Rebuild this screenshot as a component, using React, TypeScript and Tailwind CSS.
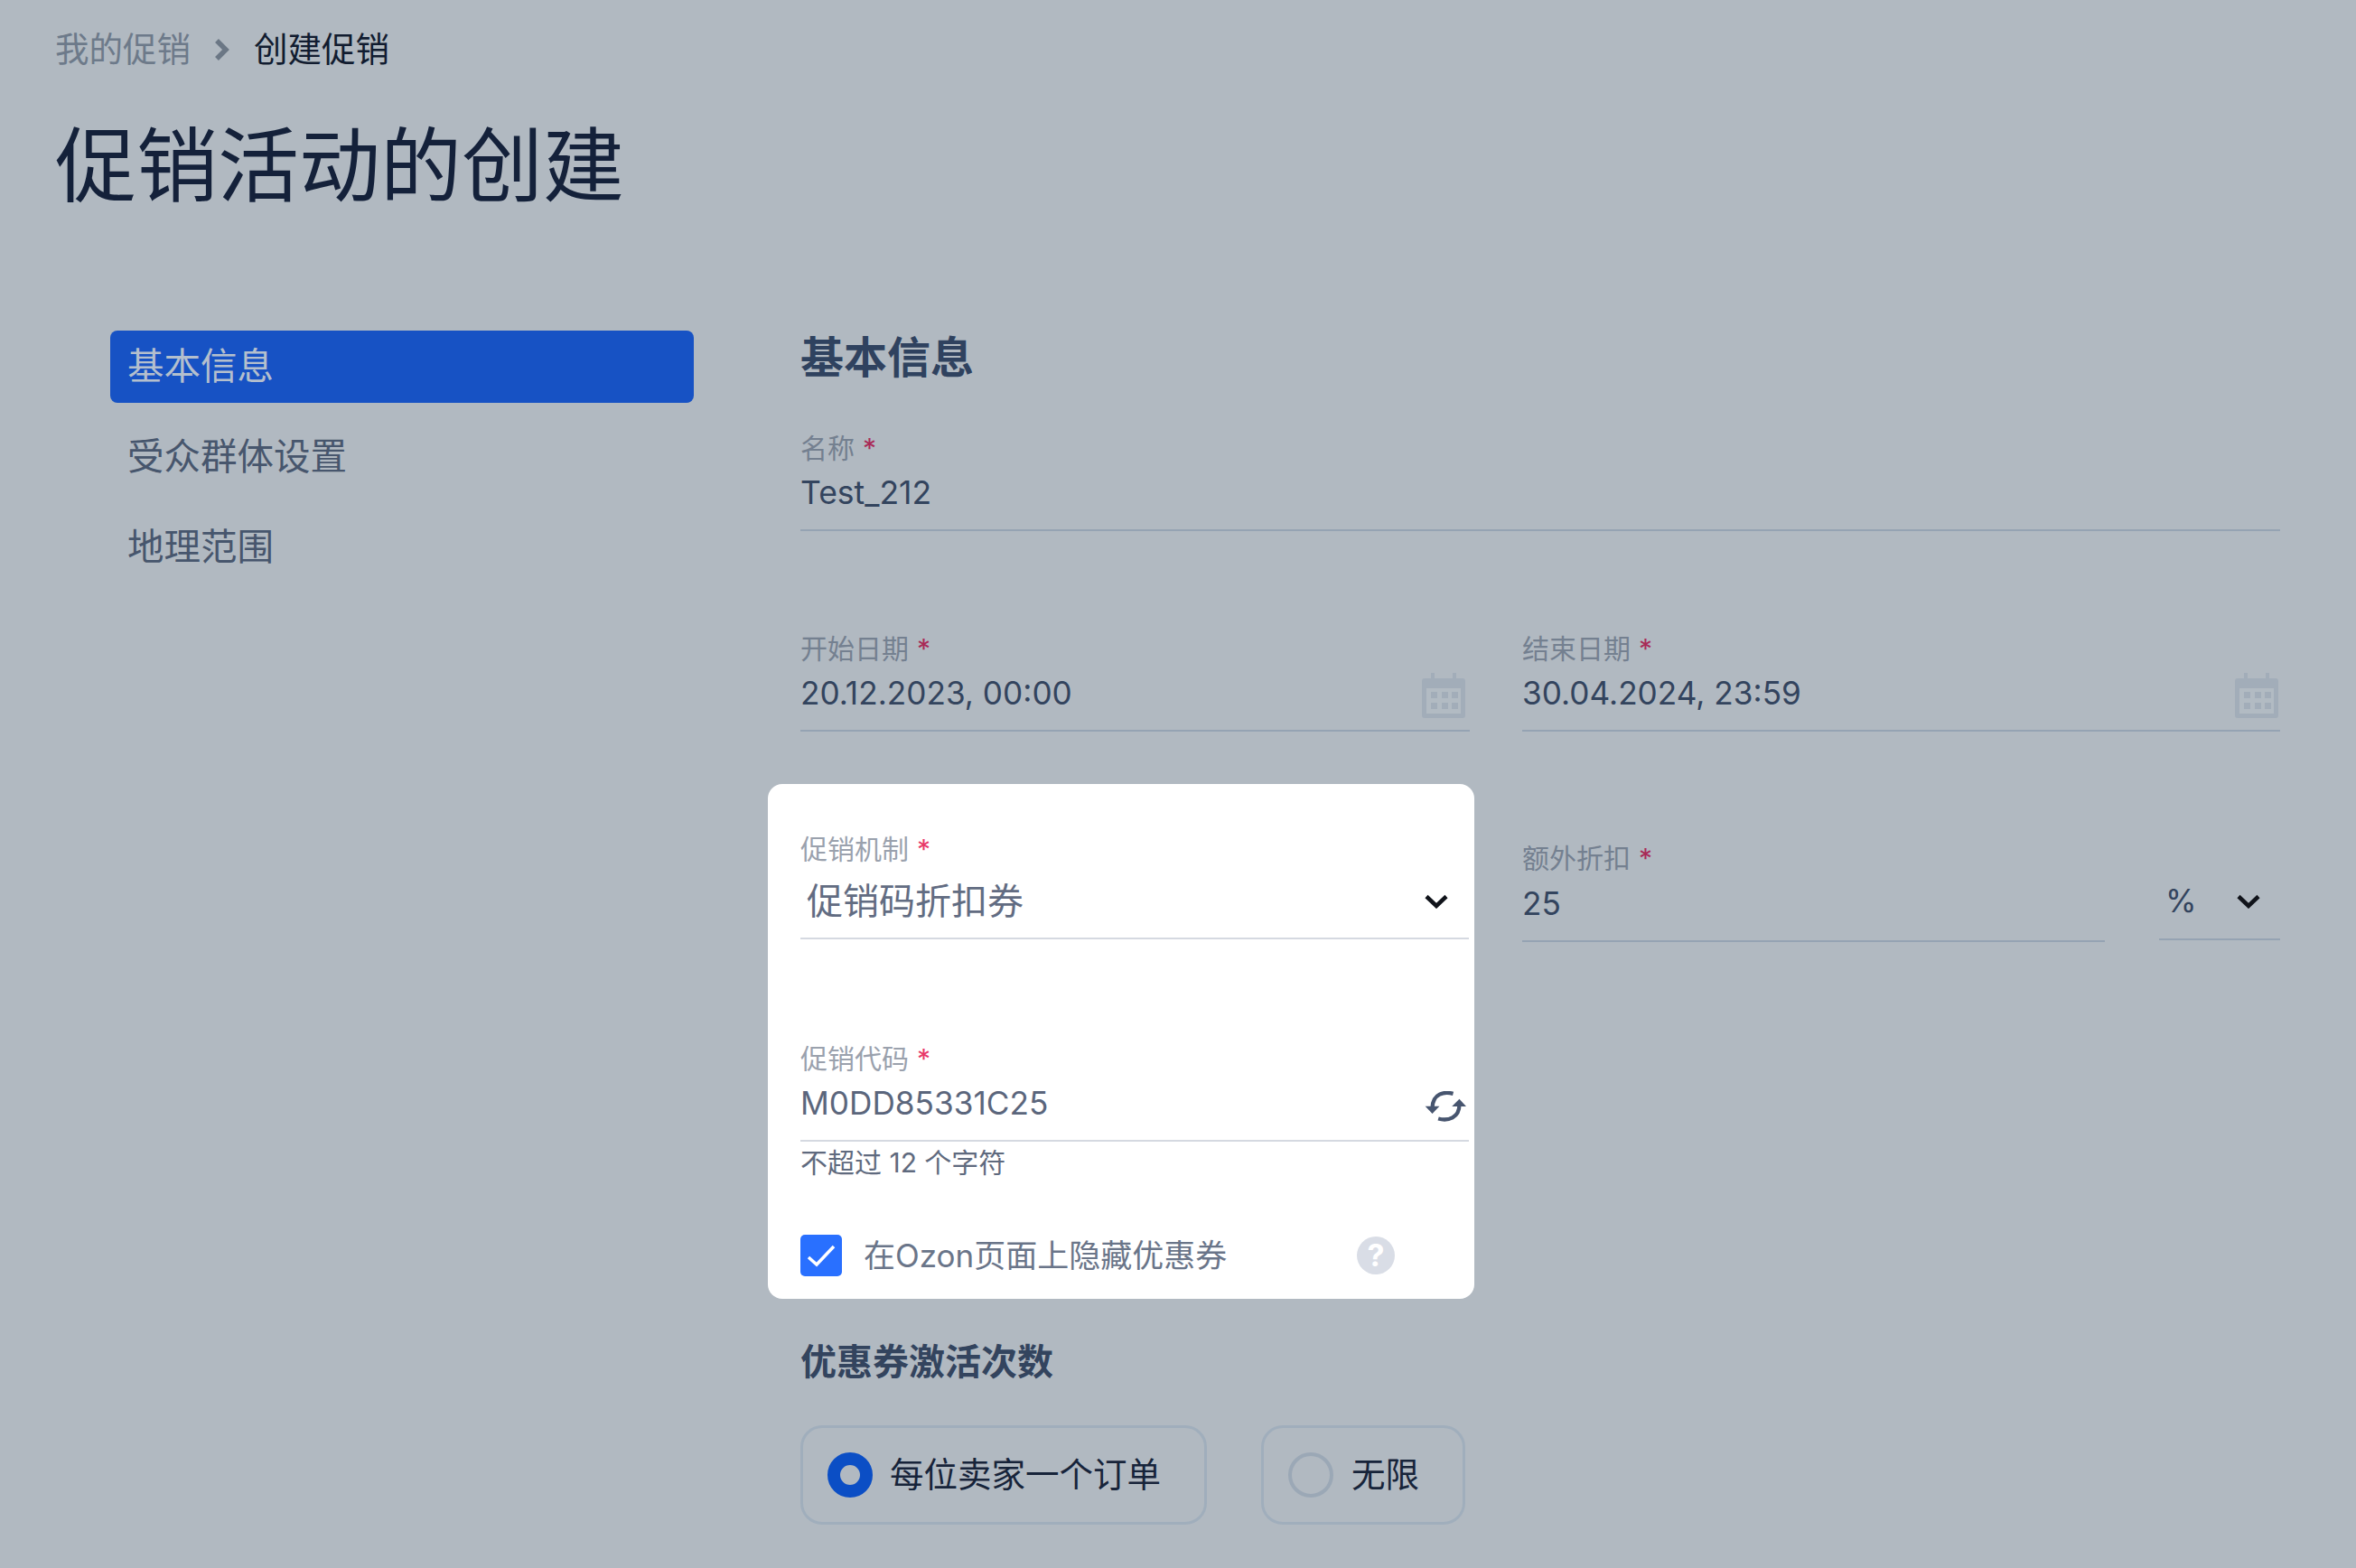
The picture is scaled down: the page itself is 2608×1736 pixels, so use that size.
import React from "react";

const Star = ({ card }: { card?: boolean }) => (
  <span className={`ml-[9px] text-[30px] leading-[30px] ${card ? "text-[#e8386a]" : "text-[#a92a57]"}`}>*</span>
);

const Label = ({ text, card }: { text: string; card?: boolean }) => (
  <div className={`h-[40px] flex items-center text-[30px] font-normal ${card ? "text-[#9aa1ad]" : "text-[#748090]"}`}>
    {text}
    <Star card={card} />
  </div>
);

const Calendar = ({ right }: { right?: boolean }) => (
  <svg width="50" height="52" viewBox="0 0 50 52" className={right ? "mt-[7px] mr-[1px]" : "mt-[7px] mr-[4px]"}>
    <rect x="11" y="0" width="4" height="8" fill="#a2adb9" />
    <rect x="35" y="0" width="4" height="8" fill="#a2adb9" />
    <rect x="1" y="6" width="48" height="44" rx="3" fill="#a2adb9" />
    <rect x="6" y="17" width="38" height="28" fill="#b2bbc3" />
    {[10, 22, 33].map((x) => (
      <React.Fragment key={x}>
        <rect x={x + 1} y="21" width="7" height="7" fill="#a2adb9" />
        <rect x={x + 1} y="33" width="7" height="7" fill="#a2adb9" />
      </React.Fragment>
    ))}
  </svg>
);

const Chevron = () => (
  <svg width="26" height="16" viewBox="0 0 26 16" fill="none" className="shrink-0">
    <path d="M2 2.5 L13 13 L24 2.5" stroke="#10131a" strokeWidth="4.5" />
  </svg>
);

const Refresh = () => (
  <svg width="46" height="34" viewBox="112 85 140 102" fill="none" className="mt-[16px] mr-[3px]">
    <path d="M208 93 C178 85 140 92 138 140" stroke="#47556f" strokeWidth="13" />
    <path d="M114 135 L162 135 L138 160 Z" fill="#47556f" />
    <path d="M158 177 C190 186 230 175 229 128" stroke="#47556f" strokeWidth="13" />
    <path d="M204 136 L252 136 L229 111 Z" fill="#47556f" />
  </svg>
);

const Help = () => (
  <div className="w-[42px] h-[42px] rounded-full bg-[#d9dde6] flex items-center justify-center text-white font-bold text-[34px] leading-none">
    ?
  </div>
);

const Radio = ({ checked, text, wide }: { checked?: boolean; text: string; wide?: boolean }) => (
  <div
    className={`h-[110px] rounded-[24px] border-[3px] border-[#a0aebc] flex items-center ${
      wide ? "w-[450px] pl-[27px]" : "w-[226px] pl-[27px]"
    }`}
  >
    <div
      className={`w-[50px] h-[50px] rounded-full ${
        checked ? "border-[14px] border-[#0b4ec5] bg-[#b1b9c1]" : "border-[4px] border-[#9ba8b6]"
      }`}
    />
    <span className={`text-[37.5px] font-normal text-[#17243a] ${checked ? "ml-[19px]" : "ml-[20px]"}`}>{text}</span>
  </div>
);

export default function App() {
  return (
    <div
      className="w-[2608px] h-[1736px] overflow-hidden bg-[#b1b9c1] pl-[61px] pt-[28px]"
      style={{ fontFamily: 'Inter, "Noto Sans CJK SC", sans-serif' }}
    >
      <div className="h-[54px] flex items-center text-[37.5px] font-normal">
        <span className="text-[#6d7a8a]">我的促销</span>
        <svg width="17" height="26" viewBox="0 0 17 26" fill="none" className="ml-[26px] mr-[27px]">
          <path d="M3 3 L13 13 L3 23" stroke="#6b7785" strokeWidth="5.5" />
        </svg>
        <span className="text-[#111c30]">创建促销</span>
      </div>
      <h1 className="h-[120px] mt-[42px] leading-[120px] text-[90px] font-normal text-[#14213a]">促销活动的创建</h1>
      <div className="flex mt-[122px]">
        <aside className="w-[646px] ml-[61px] shrink-0">
          <div className="h-[80px] rounded-[8px] bg-[#1752c4] text-[#b4bfcd] text-[40.5px] font-normal pl-[19px] flex items-center">
            基本信息
          </div>
          <div className="h-[100px] mt-[10px] flex items-center pl-[19px] text-[40.5px] font-normal text-[#47566d]">受众群体设置</div>
          <div className="h-[100px] flex items-center pl-[19px] text-[40.5px] font-normal text-[#47566d]">地理范围</div>
        </aside>
        <main className="ml-[118px] w-[1638px] shrink-0">
          <h2 className="h-[60px] leading-[60px] text-[48px] font-bold text-[#2f425f]">基本信息</h2>
          <div className="mt-[50px]">
            <Label text="名称" />
            <div className="h-[72px] border-b-2 border-[#95a3b3] text-[35.5px] leading-[60px] font-normal text-[#33445e]">Test_212</div>
          </div>
          <div className="flex mt-[110px] gap-[58px]">
            <div className="w-[741px]">
              <Label text="开始日期" />
              <div className="h-[72px] border-b-2 border-[#95a3b3] text-[35.2px] leading-[58px] text-[#33445e] flex justify-between">
                20.12.2023, 00:00
                <Calendar />
              </div>
            </div>
            <div className="w-[839px]">
              <Label text="结束日期" />
              <div className="h-[72px] border-b-2 border-[#95a3b3] text-[35.2px] leading-[58px] text-[#33445e] flex justify-between">
                30.04.2024, 23:59
                <Calendar right />
              </div>
            </div>
          </div>
          <div className="flex mt-[58px]">
            <div className="w-[782px] h-[570px] ml-[-36px] bg-white rounded-[16px] pl-[36px] pr-[6px] pt-[52px] shrink-0">
              <Label text="促销机制" card />
              <div className="h-[80px] pb-[2px] border-b-2 border-[#d5d9e1] flex items-center justify-between pl-[7px] pr-[23px] text-[40px] font-normal text-[#626c82]">
                促销码折扣券
                <Chevron />
              </div>
              <div className="mt-[112px]">
                <Label text="促销代码" card />
                <div className="h-[72px] border-b-2 border-[#d5d9e1] text-[35.2px] leading-[58px] text-[#5b667c] flex justify-between">
                  M0DD85331C25
                  <Refresh />
                </div>
              </div>
              <div className="h-[46px] leading-[46px] text-[30px] font-normal text-[#5f6a7e]">不超过 12 个字符</div>
              <div className="flex items-center mt-[54px]">
                <div className="w-[46px] h-[46px] rounded-[5px] bg-[#2970ff] flex items-center justify-center">
                  <svg width="34" height="26" viewBox="0 0 34 26" fill="none">
                    <path d="M3 15 L12 23 L31 3" stroke="white" strokeWidth="3.5" />
                  </svg>
                </div>
                <span className="ml-[24px] text-[35px] font-normal text-[#6a7589] w-[546px]">在Ozon页面上隐藏优惠券</span>
                <Help />
              </div>
            </div>
            <div className="ml-[53px] w-[839px] pt-[62px]">
              <div className="flex">
                <div className="w-[645px]">
                  <Label text="额外折扣" />
                  <div className="h-[73px] border-b-2 border-[#95a3b3] text-[35.2px] leading-[60px] text-[#33445e]">25</div>
                </div>
                <div className="w-[134px] ml-[60px] h-[111px] border-b-2 border-[#95a3b3] pt-[40px] flex items-center justify-between pl-[7px] pr-[22px] text-[35.2px] text-[#33445e]">
                  <span className="mt-[-14px]">%</span>
                  <span className="mt-[-14px]"><Chevron /></span>
                </div>
              </div>
            </div>
          </div>
          <h3 className="h-[60px] leading-[60px] mt-[40px] text-[40px] font-bold text-[#33445e]">优惠券激活次数</h3>
          <div className="flex mt-[40px] gap-[60px]">
            <Radio checked text="每位卖家一个订单" wide />
            <Radio text="无限" />
          </div>
        </main>
      </div>
    </div>
  );
}
